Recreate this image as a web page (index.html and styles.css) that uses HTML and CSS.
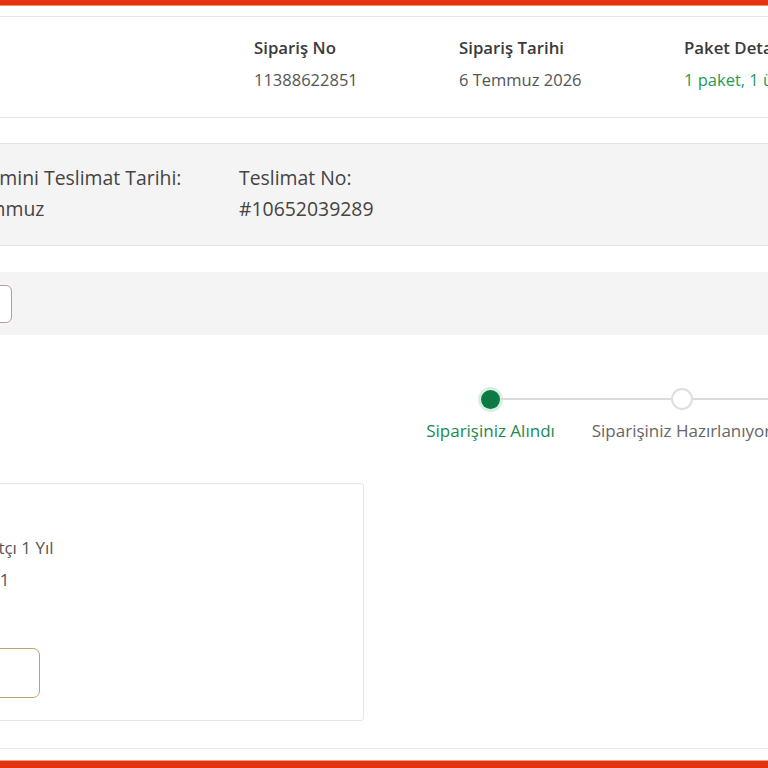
FILE: index.html
```html
<!DOCTYPE html>
<html lang="tr">
<head>
<meta charset="utf-8">
<title>Sipariş Detayı</title>
<link rel="stylesheet" href="styles.css">
</head>
<body>
<div class="topbar"></div>
<div class="frame">
  <div class="container">
    <section class="order-head">
      <div class="col col-no">
        <div class="label">Sipariş No</div>
        <div class="value">11388622851</div>
      </div>
      <div class="col col-date">
        <div class="label">Sipariş Tarihi</div>
        <div class="value">6 Temmuz 2026</div>
      </div>
      <div class="col col-pack">
        <div class="label">Paket Detayı</div>
        <div class="value green"><span class="u">1 paket</span>, 1 ürün</div>
      </div>
    </section>

    <section class="delivery">
      <div class="d-item d-date">
        <div>Tahmini Teslimat Tarihi:</div>
        <div>Temmuz</div>
      </div>
      <div class="d-item">
        <div>Teslimat No:</div>
        <div>#10652039289</div>
      </div>
    </section>

    <section class="actions">
      <button class="btn-pink">Satıcıya Sor</button>
    </section>

    <section class="stepper">
      <div class="step done first">
        <div class="track"><span class="seg"></span><span class="dot"></span><span class="seg"></span></div>
        <div class="step-label">Siparişiniz Alındı</div>
      </div>
      <div class="step">
        <div class="track"><span class="seg"></span><span class="dot"></span><span class="seg"></span></div>
        <div class="step-label">Siparişiniz Hazırlanıyor</div>
      </div>
      <div class="step">
        <div class="track"><span class="seg"></span><span class="dot"></span><span class="seg"></span></div>
        <div class="step-label">Kargoya Verildi</div>
      </div>
    </section>

    <section class="card">
      <div class="card-text">
        <div>İthalatçı 1 Yıl</div>
        <div>Adet: 1</div>
      </div>
      <button class="btn-gold">Değerlendir</button>
    </section>

    <div class="bottom-line"></div>
  </div>
</div>
<div class="botbar"></div>
</body>
</html>
```
FILE: styles.css
```css
* { box-sizing: border-box; }
html, body { margin: 0; padding: 0; }
body {
  width: 768px;
  height: 768px;
  overflow: hidden;
  background: #ffffff;
  font-family: "Open Sans", "Noto Sans", Lato, sans-serif;
  color: #333;
}
.topbar {
  height: 6px;
  background: #e5330f;
  border-bottom: 1px solid #f08a6a;
}
.frame {
  overflow: hidden;
  width: 768px;
  padding-top: 10px;
}
.container {
  margin-left: -200px;
  width: 1200px;
  border-top: 1px solid #e6e6ef;
}
.order-head {
  display: flex;
  height: 101px;
  padding: 21px 0 0 454px;
  border-bottom: 1px solid #e5e5e5;
}
.col-no { width: 205px; }
.col-date { width: 225px; }
.label {
  font-size: 16.8px;
  line-height: 20px;
  font-weight: 600;
  color: #3a3a3a;
}
.value {
  margin-top: 12px;
  font-size: 16.5px;
  line-height: 20px;
  color: #555;
}
.value.green { color: #1f9a55; }

.delivery {
  display: flex;
  margin-top: 25px;
  height: 103px;
  padding: 18px 0 0 166px;
  background: #f4f4f4;
  border-top: 1px solid #e3e3e3;
  border-bottom: 1px solid #e3e3e3;
  font-size: 19.4px;
  line-height: 31px;
  color: #444;
}
.d-date { width: 273px; }

.actions {
  margin-top: 26px;
  height: 63px;
  padding: 13px 0 0 62px;
  background: #f4f4f4;
}
.btn-pink {
  width: 150px;
  height: 38px;
  border: 1.5px solid #c194b0;
  border-radius: 6px;
  background: #fff;
  font-family: inherit;
  font-size: 15px;
  color: #8a4a70;
}

.stepper {
  display: flex;
  margin-top: 53px;
  padding-left: 595px;
}
.step {
  width: 191px;
  display: flex;
  flex-direction: column;
  align-items: center;
}
.track {
  display: flex;
  align-items: center;
  width: 100%;
  height: 22px;
}
.seg {
  flex: 1;
  height: 2px;
  background: #dcdcdc;
}
.first .seg:first-child { background: transparent; }
.dot {
  width: 22px;
  height: 22px;
  border-radius: 50%;
  border: 2px solid #dedede;
  background: #fff;
}
.done .dot {
  width: 19px;
  height: 19px;
  border: none;
  background: #0b7a43;
  box-shadow: 0 0 0 3px #d9efe2;
}
.step-label {
  margin-top: 11px;
  font-size: 17px;
  line-height: 20px;
  color: #666;
  white-space: nowrap;
}
.done .step-label { color: #1a8a50; }

.card {
  margin: 42px 0 0 40px;
  width: 524px;
  height: 238px;
  border: 1px solid #e6e6e6;
  border-radius: 3px;
  padding: 48px 0 0 29px;
}
.card-text {
  margin-left: 84px;
  font-size: 17px;
  line-height: 32px;
  color: #555;
}
.btn-gold {
  display: block;
  margin-top: 52px;
  width: 170px;
  height: 50px;
  border: 1.5px solid #c6a06a;
  border-radius: 7px;
  background: #fff;
  font-family: inherit;
  font-size: 15px;
  color: #9a6d30;
}
.bottom-line {
  margin-top: 27px;
  height: 1px;
  background: #e8e8e8;
}
.botbar {
  position: fixed;
  left: 0;
  bottom: 0;
  width: 768px;
  height: 8px;
  background: #e5330f;
  border-top: 1px solid #f3a27f;
}
```
